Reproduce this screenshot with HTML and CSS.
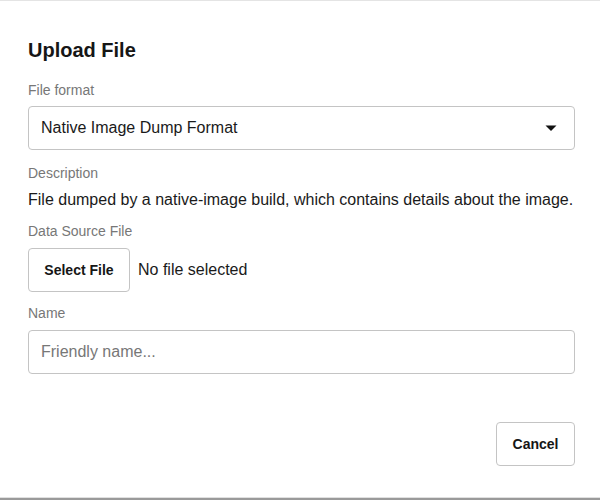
FILE: index.html
```html
<!DOCTYPE html>
<html>
<head>
<meta charset="utf-8">
<link rel="stylesheet" href="styles.css">
</head>
<body>
<div class="dialog">
  <h1 class="title">Upload File</h1>
  <div class="label label-first">File format</div>
  <div class="select">
    <span>Native Image Dump Format</span>
    <svg class="caret" width="12" height="8" viewBox="0 0 12 8"><path d="M0.5 1.5h11L6 7z" fill="#111"/></svg>
  </div>
  <div class="label label-desc">Description</div>
  <p class="desc">File dumped by a native-image build, which contains details about the image.</p>
  <div class="label label-src">Data Source File</div>
  <div class="file-row">
    <button class="btn">Select File</button>
    <span class="file-status">No file selected</span>
  </div>
  <div class="label label-name">Name</div>
  <input class="input" type="text" placeholder="Friendly name...">
  <div class="footer">
    <button class="btn btn-cancel">Cancel</button>
  </div>
</div>
<div class="bottom-edge"></div>
</body>
</html>
```
FILE: styles.css
```css
* { box-sizing: border-box; }
html, body { margin: 0; padding: 0; background: #fff; }
body {
  width: 600px;
  height: 500px;
  font-family: "Liberation Sans", Arial, sans-serif;
  color: #1a1a1a;
  border-top: 1px solid #e4e4e4;
  display: flex;
  flex-direction: column;
  overflow: hidden;
}
.dialog {
  flex: 1;
  padding: 37px 25px 0 28px;
  display: flex;
  flex-direction: column;
}
.title {
  margin: 0;
  font-size: 20px;
  line-height: 24px;
  font-weight: bold;
  color: #161616;
}
.label {
  font-size: 14px;
  line-height: 20px;
  color: #777;
}
.label-first { margin-top: 18px; }
.label-desc { margin-top: 13px; }
.label-src { margin-top: 9px; }
.label-name { margin-top: 11px; }
.select {
  margin-top: 6px;
  height: 44px;
  border: 1px solid #c4c4c4;
  border-radius: 4px;
  display: flex;
  align-items: center;
  justify-content: space-between;
  padding: 0 17px 0 12px;
  font-size: 16px;
  color: #1a1a1a;
}
.caret { display: block; }
.desc {
  margin: 5px 0 0;
  font-size: 16px;
  line-height: 24px;
  color: #1a1a1a;
}
.file-row {
  margin-top: 7px;
  display: flex;
  align-items: center;
  gap: 8px;
}
.btn {
  height: 44px;
  padding: 0 16px;
  background: #fff;
  border: 1px solid #c4c4c4;
  border-radius: 4px;
  font-family: "Liberation Sans", Arial, sans-serif;
  font-size: 14px;
  font-weight: bold;
  color: #161616;
}
.file-row .btn { width: 102px; padding: 0; }
.file-status { font-size: 16px; color: #1a1a1a; }
.input {
  margin-top: 7px;
  height: 44px;
  width: 100%;
  border: 1px solid #c4c4c4;
  border-radius: 4px;
  padding: 0 12px;
  font-family: "Liberation Sans", Arial, sans-serif;
  font-size: 16px;
  color: #1a1a1a;
  outline: none;
}
.input::placeholder { color: #777; }
.footer {
  margin-top: 48px;
  display: flex;
  justify-content: flex-end;
}
.btn-cancel { width: 79px; padding: 0; }
.bottom-edge {
  height: 3px;
  border-top: 1px solid #e0e0e0;
  background: #9a9a9a;
}
```
